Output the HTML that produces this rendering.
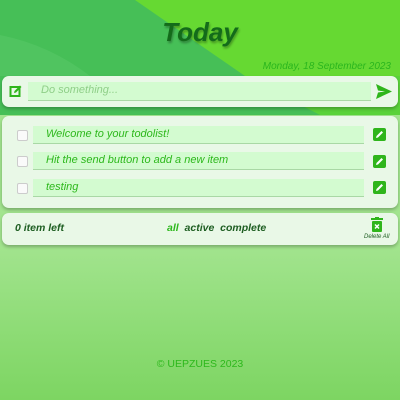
<!DOCTYPE html>
<html><head><style>
*{margin:0;padding:0;box-sizing:border-box}
body{width:400px;height:400px;overflow:hidden;position:relative;font-family:"Liberation Sans",sans-serif;font-style:italic;background:linear-gradient(#a2e48e 245px,#7dd562 400px)}
.bg{position:absolute;left:0;top:0;width:400px;height:115px;background:#66d932;overflow:hidden}
.bg svg{position:absolute;left:0;top:0}
.card{position:absolute;left:2px;width:396px;background:#e9f8e7;border-radius:7px;box-shadow:0 2px 3px rgba(0,0,0,.25)}
.field{position:absolute;background:#d3fbd0;border-bottom:1.5px solid #a9d8a5;color:#2db81c;font-size:11px;padding-left:13px;line-height:17px}
.cb{position:absolute;left:15px;width:11px;height:11px;background:#fafafa;border:1px solid #ccc;border-radius:2px}
.eb{position:absolute;left:371px;width:13px;height:13px;background:#2fb51b;border-radius:2px}
.eb svg{position:absolute;left:2px;top:2px}
</style></head><body>
<div class="bg"><svg width="400" height="115"><polygon points="0,0 135,0 245,76 400,76 400,115 0,115" fill="#46bf57"/><path d="M0,35 Q50,45 90,76 L0,76Z" fill="#52c563" opacity=".8"/><path d="M245,76 L320,115 L400,115 L400,76Z" fill="#5ad23a"/></svg></div>
<div style="position:absolute;left:0;width:400px;top:17px;text-align:center;font-size:26px;font-weight:bold;color:#136b1a;text-shadow:1px 2px 2px rgba(0,0,0,.3)">Today</div>
<div style="position:absolute;right:9px;top:61px;font-size:10px;color:#2ab61e">Monday, 18 September 2023</div>
<div class="card" style="top:76px;height:31px">
<svg style="position:absolute;left:7px;top:8px" width="14" height="14" viewBox="0 0 14 14"><rect x="1.5" y="3" width="9" height="9" fill="none" stroke="#2fb51b" stroke-width="2"/><path d="M5 9 L5.5 7 L11 1.5 L12.5 3 L7 8.5Z" fill="#2fb51b"/></svg>
<div class="field" style="left:26px;top:6px;width:343px;height:19px;color:#8fcf88">Do something...</div>
<svg style="position:absolute;left:374px;top:8px" width="16" height="15" viewBox="0 0 16 15"><path d="M0 0 L16 7.5 L0 15 L2 8.5 L9 7.5 L2 6.5Z" fill="#2fb51b"/></svg>
</div>
<div class="card" style="top:116px;height:92px">
<div class="cb" style="top:14px"></div><div class="field" style="left:31px;top:10px;width:331px;height:18px">Welcome to your todolist!</div><div class="eb" style="top:12px"><svg width="9" height="9"><path d="M1 8 L1.5 6 L6.5 1 L8 2.5 L3 7.5Z" fill="#fff"/></svg></div>
<div class="cb" style="top:40px"></div><div class="field" style="left:31px;top:36px;width:331px;height:18px">Hit the send button to add a new item</div><div class="eb" style="top:39px"><svg width="9" height="9"><path d="M1 8 L1.5 6 L6.5 1 L8 2.5 L3 7.5Z" fill="#fff"/></svg></div>
<div class="cb" style="top:67px"></div><div class="field" style="left:31px;top:63px;width:331px;height:18px">testing</div><div class="eb" style="top:65px"><svg width="9" height="9"><path d="M1 8 L1.5 6 L6.5 1 L8 2.5 L3 7.5Z" fill="#fff"/></svg></div>
</div>
<div class="card" style="top:213px;height:32px">
<div style="position:absolute;left:13px;top:9px;font-size:10.5px;font-weight:bold;color:#1e5e22">0 item left</div>
<div style="position:absolute;left:165px;top:9px;font-size:10.5px;font-weight:bold;color:#1e5e22"><span style="color:#2db81c">all</span>&nbsp; active&nbsp; complete</div>
<svg style="position:absolute;left:369px;top:4px" width="12" height="15" viewBox="0 0 12 15"><rect x="0" y="1" width="12" height="2" fill="#2fb51b"/><rect x="4" y="0" width="4" height="2" fill="#2fb51b"/><rect x="1" y="4" width="10" height="11" rx="1" fill="#2fb51b"/><path d="M4 7.5 L8 11.5 M8 7.5 L4 11.5" stroke="#fff" stroke-width="1.5"/></svg>
<div style="position:absolute;left:362px;top:21px;font-size:6px;color:#1e5e22">Delete All</div>
</div>
<div style="position:absolute;left:0;width:400px;top:358px;text-align:center;font-size:10.5px;color:#2db81c;font-style:normal">© UEPZUES 2023</div>
</body></html>
